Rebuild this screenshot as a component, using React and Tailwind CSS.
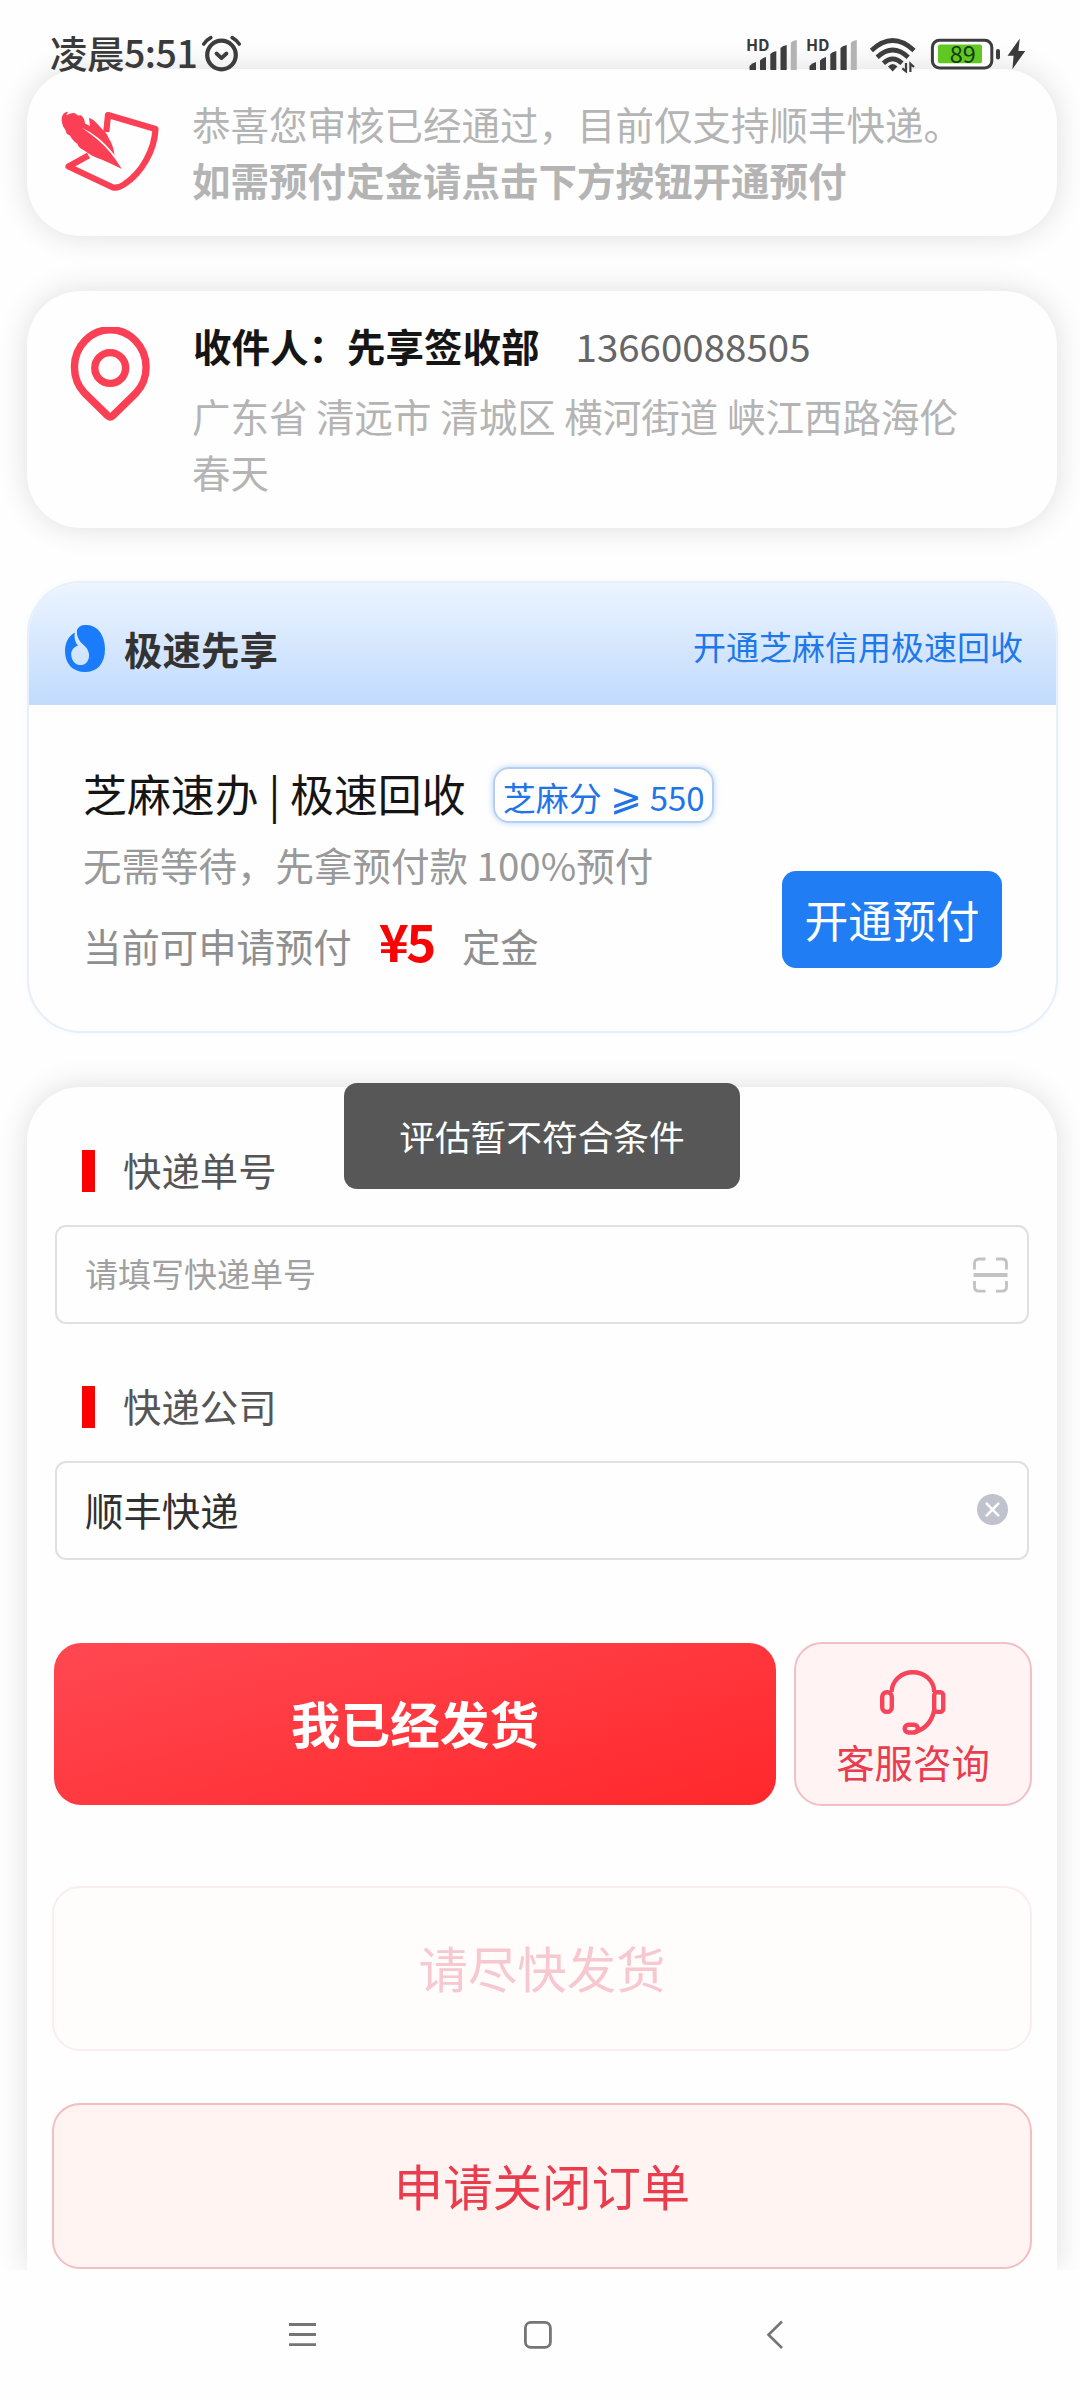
import React from "react";

const cardShadow = "shadow-[0_0_30px_rgba(0,0,0,0.13)]";

function SignalIcon() {
  return (
    <div className="relative h-[34px] w-[50px]">
      <span className="absolute -top-[5px] -left-px text-[16px] leading-[24px] font-bold whitespace-nowrap text-[#3a3a3a]">HD</span>
      <svg className="h-[34px] w-[50px]" viewBox="747 37 50 34">
        <g fill="#3d3d3d">
          <path d="M749.5 70V66Q752 63 756 62V70Z" />
          <path d="M760 70V60.5Q762 58 766 57V70Z" />
          <path d="M770.3 70V54Q772 52 776.3 51V70Z" />
          <path d="M780.5 70V48Q782 46 786.7 45V70Z" />
        </g>
        <path d="M790.8 70V43Q792 41 796.8 40V70Z" fill="#b3b3b3" />
      </svg>
    </div>
  );
}

function StatusBar() {
  return (
    <header className="relative z-10 flex h-[69px] shrink-0 items-start justify-between pl-[50px] pr-[54px]">
      <div className="flex items-start text-[37.5px] leading-[54px] font-medium text-[#3a3a3a] pt-[25px]">
        <span className="tracking-[-0.5px] whitespace-nowrap">凌晨5:51</span>
        <svg className="mt-[10px] ml-[4px] w-[40px] h-[38px]" viewBox="202 35 40 38" fill="none" stroke="#3d3d3d" strokeLinecap="round" strokeLinejoin="round">
          <circle cx="222.5" cy="55" r="14.3" strokeWidth="4.2" />
          <path d="M217.5 53.5l5 4.6 5-4.6" strokeWidth="3.8" />
          <path d="M204.8 44q2.8-4 7-6.3M240.2 44q-2.8-4-7-6.3" strokeWidth="3.6" />
        </svg>
      </div>
      <div className="flex items-start pt-[37px]">
        <SignalIcon />
        <div className="w-[10px]" />
        <SignalIcon />
        <svg className="ml-[12px] w-[48px] h-[36px]" viewBox="869 37 48 36" fill="none" stroke="#3d3d3d" strokeWidth="4.6">
          <path d="M871.4 50.5Q892.7 30.5 914 50.5" />
          <path d="M877.2 57.2Q892.7 42.8 908.2 57.2" />
          <path d="M883.4 63.2Q892.7 54.6 902 63.2" />
          <path d="M888 66.5Q892.7 61.5 897.4 66.5L892.7 71.4Z" fill="#3d3d3d" stroke="none" />
          <path d="M906 63v8.400l-3.600-3M910.400 72v-8.200l3.600 3.200" strokeWidth="2.2" />
        </svg>
        <svg className="ml-[13px] w-[72px] h-[34px]" viewBox="930 37 72 34">
          <rect x="932.4" y="40.3" width="59.4" height="27.6" rx="7" fill="#fff" stroke="#3d3d3d" strokeWidth="3" />
          <rect x="938" y="44.6" width="44" height="18.6" rx="2" fill="#5fc823" />
          <rect x="996" y="49" width="4" height="10.4" rx="2" fill="#3d3d3d" />
          <text x="962.7" y="62.8" fontSize="23.5" textAnchor="middle" fontWeight="400" fill="#173a0a">89</text>
        </svg>
        <svg className="ml-[5px] w-[19px] h-[34px]" viewBox="1007 37 19 34" fill="#3a3a3a">
          <path d="M1019.8 38.5L1007.6 55.8H1013.6L1012.4 69.2L1025.2 51H1018.4Z" />
        </svg>
      </div>
    </header>
  );
}

function QuillIcon() {
  return (
    <svg className="w-[104px] h-[84px]" viewBox="61 110 104 84">
      <path d="M107.300 132L109 115L156.500 129C155.500 150 143 173 125 184.500Q119 188.500 114 187.500L69.500 166.500L89.500 155.500" fill="none" stroke="#fb3f54" strokeWidth="6.200" strokeLinejoin="round" />
      <path d="M62.700 121C62.500 116 64 112 69 111.700L67 115.500Q72 112 76 113.300L79 115.500L82 115.300Q85.500 118 86 123.500L91 126L90 117.700Q95 119.500 98 123.500L103 129Q108 133 109.500 138Q114 144 115.600 155Q107 144 98 137Q90 131 82.700 127.700Q92 134 99 140Q112 151 122.800 169Q112 163.500 102.500 159.500Q92 156 86 151L81 148Q79 146.500 78.500 144Q73 140 71 135.500Q67 134.500 66.500 130Q63 126 62.700 121Z" fill="#fb3f54" />
    </svg>
  );
}

function PinIcon() {
  return (
    <svg className="w-[82px] h-[98px]" viewBox="69 327 82 98" fill="none" stroke="#fb3f54" strokeWidth="7.400" strokeLinejoin="round">
      <path d="M84.500 393A35.800 37.300 0 1 1 136 393L112.500 416Q110.250 418 108 416Z" />
      <circle cx="110.200" cy="368" r="15.400" />
    </svg>
  );
}

function FlameIcon() {
  return (
    <svg className="w-[40px] h-[47px]" viewBox="65 625 40 47">
      <path d="M84 625C98 624 105 636 105 649C105 664 97 672 85 672C73 672 65 664 65 651C65 643 68.500 636 74.800 632.500C74 638 75 642 78 645.500C72 648 70.500 652 71.500 657C73 663 77 665.500 81.500 665C87 664.500 89.500 659 89 654C88 648 84.500 646 80.500 642C77.500 638 76.500 634 77 630Q79 625.500 84 625Z" fill="#1b7cfb" />
    </svg>
  );
}

function HeadsetIcon() {
  return (
    <svg className="w-[66px] h-[66px]" viewBox="880 1670 66 66" fill="none" stroke="#f6455a" strokeWidth="4.400">
      <path d="M891.500 1692C892 1680 902 1672.300 912.700 1672.300C924 1672.300 934 1680 934.300 1692" />
      <rect x="882.200" y="1692.300" width="9.600" height="19.600" rx="4.500" />
      <rect x="934.200" y="1692.300" width="9" height="19.600" rx="3" />
      <path d="M934.500 1709C932 1722 925 1729.500 914 1732.300" />
      <rect x="904.700" y="1724.700" width="13.200" height="7.800" rx="3.900" />
    </svg>
  );
}

function FieldLabel({ children }) {
  return (
    <div className="flex h-[42px] items-center pl-[55px]">
      <div className="h-[42px] w-[13px] bg-[#fb0000]" />
      <div className="-mt-[4px] ml-[28px] text-[38.4px] leading-[42px] text-[#555]">{children}</div>
    </div>
  );
}

export default function App() {
  return (
    <div className="flex h-[2400px] w-[1080px] flex-col overflow-hidden bg-[#fefefe] [font-family:'Noto_Sans_CJK_SC',sans-serif]">
      <StatusBar />
      <main className="flex min-h-0 flex-1 flex-col pr-[23px] pl-[27px]">
        <section className={`flex h-[167px] shrink-0 rounded-[54px] bg-[#fefefe] pl-[33px] ${cardShadow}`}>
          <div className="mt-[41px] w-[132px]"><QuillIcon /></div>
          <div className="mt-[26px] text-[38.5px] leading-[56px] text-[#b4b4b4]">
            <p>恭喜您审核已经通过，目前仅支持顺丰快递。</p>
            <p className="font-bold">如需预付定金请点击下方按钮开通预付</p>
          </div>
        </section>

        <section className={`mt-[55px] flex h-[237px] shrink-0 rounded-[54px] bg-[#fefefe] pl-[42px] ${cardShadow}`}>
          <div className="mt-[36px] w-[123px]"><PinIcon /></div>
          <div className="mt-[26px] w-[780px] text-[38.5px] leading-[56px]">
            <div className="flex">
              <span className="ml-px font-bold text-[#151515]">收件人：先享签收部</span>
              <span className="ml-[36px] text-[#666]">13660088505</span>
            </div>
            <p className="mt-[14px] text-[#b4b4b4]">广东省 清远市 清城区 横河街道 峡江西路海伦春天</p>
          </div>
        </section>

        <section className="mt-[53px] -mr-px flex h-[452px] shrink-0 flex-col overflow-hidden rounded-[54px] border-2 border-[#e6effa] bg-[#fefefe] shadow-[0_0_5px_rgba(60,140,250,0.06)]">
          <div className="flex h-[122px] items-center bg-linear-to-b from-[#ecf4fe] to-[#c1dbfd] pt-[8px] pl-[36px] pr-[33px]">
            <FlameIcon />
            <h2 className="ml-[19px] text-[38.5px] leading-[50px] font-bold text-[#333]">极速先享</h2>
            <span className="-mt-[4px] ml-auto text-[33px] leading-[44px] text-[#1f78ea]">开通芝麻信用极速回收</span>
          </div>
          <div className="flex h-[326px] justify-between pl-[54px] pr-[54px]">
            <div className="pt-[62px]">
              <div className="flex h-[56px] items-center">
                <span className="-mt-[4px] text-[43.9px] leading-[56px] text-[#151515]">芝麻速办 | 极速回收</span>
                <span className="ml-[27px] flex h-[56px] w-[221px] items-center justify-between rounded-[16px] border-2 border-[#b4cff2] pt-[3px] pr-[7px] pl-[8px] text-[33px] leading-[48px] whitespace-nowrap text-[#1f75e6] shadow-[0_0_6px_rgba(50,125,240,0.35)]">
                  <span>芝麻分</span>
                  <span className="-mt-[6px] text-[38px] font-light">⩾</span>
                  <span>550</span>
                </span>
              </div>
              <p className="mt-[16px] text-[38.5px] leading-[50px] text-[#999]">无需等待，先拿预付款 100%预付</p>
              <div className="mt-[25px] flex items-baseline text-[38.400px] leading-[52px] text-[#8f8f8f]">
                <span>当前可申请预付</span>
                <span className="ml-[27px] text-[51px] leading-[52px] font-bold tracking-[-2.500px] text-[#f70505]">¥5</span>
                <span className="ml-[28px]">定金</span>
              </div>
            </div>
            <button className="mt-[166px] h-[97px] w-[220px] rounded-[14px] bg-[#207df3] pb-px text-[43.8px] leading-[56px] text-white">开通预付</button>
          </div>
        </section>

        <section className={`relative mt-[54px] flex flex-1 flex-col rounded-t-[54px] bg-[#fefefe] pt-[63px] ${cardShadow}`}>
          <div className="absolute -top-[4px] left-[317px] flex h-[106px] w-[396px] items-center justify-center rounded-[13px] bg-[#575757] text-[35.700px] leading-[50px] text-white">评估暂不符合条件</div>
          <FieldLabel>快递单号</FieldLabel>
          <div className="mt-[33px] mr-[28px] ml-[28px] flex h-[99px] items-center justify-between rounded-[11px] border-2 border-[#e0e0e0] pr-[19px] pl-[28px]">
            <span className="-mt-[3px] text-[33px] leading-[44px] text-[#a0a0a0]">请填写快递单号</span>
            <svg className="w-[35px] h-[36px]" viewBox="0 0 35 36" fill="none" stroke="#c2c2c2" strokeWidth="2.800">
              <path d="M1.500 12.500V6.500Q1.500 2 6 2H12.500M23 2H29Q33.500 2 33.500 6.500V12.500M1.500 24V30Q1.500 34.200 6 34.200H12.500M23 34.200H29Q33.500 34.200 33.500 30V24" />
              <path d="M0.500 18H34.500" strokeWidth="3.800" />
            </svg>
          </div>
          <div className="mt-[62px]"><FieldLabel>快递公司</FieldLabel></div>
          <div className="mt-[33px] mr-[28px] ml-[28px] flex h-[99px] items-center justify-between rounded-[11px] border-2 border-[#e0e0e0] pr-[19px] pl-[28px]">
            <span className="-mt-[4px] text-[38.400px] leading-[50px] text-[#303030]">顺丰快递</span>
            <svg className="-mt-[2px] h-[31px] w-[31px]" viewBox="0 0 31 31">
              <circle cx="15.500" cy="15.500" r="15.500" fill="#c0c3cd" />
              <path d="M9.700 9.700L21.300 21.300M21.300 9.700L9.700 21.300" stroke="#fff" strokeWidth="2.600" strokeLinecap="round" />
            </svg>
          </div>
          <div className="mt-[82px] flex items-center justify-between pr-[25px] pl-[27px]">
            <button className="h-[162px] w-[722px] rounded-[27px] bg-linear-[165deg] from-[#ff4852] to-[#ff282b] pb-[4px] text-[49.600px] leading-[60px] font-bold text-white">我已经发货</button>
            <button className="flex h-[164px] w-[238px] flex-col items-center rounded-[28px] border-2 border-[#f1bfc5] bg-[#fff4f3] pt-[26px] text-[38.400px] leading-[52px] text-[#e83d4f]">
              <HeadsetIcon />
              <span className="-mt-[1px]">客服咨询</span>
            </button>
          </div>
          <button className="mt-[80px] mr-[25px] ml-[25px] h-[165px] shrink-0 rounded-[28px] border-2 border-[#fcecec] bg-[#fffdfc] pb-[3px] text-[49.400px] leading-[60px] text-[#f7c8cf]">请尽快发货</button>
          <button className="mt-[52px] mr-[25px] ml-[25px] h-[166px] shrink-0 rounded-[28px] border-2 border-[#f1bfc0] bg-[#fff4f2] pb-[3px] text-[49.400px] leading-[60px] text-[#ea3c4d]">申请关闭订单</button>
        </section>
      </main>
      <nav className="relative z-10 flex h-[130px] shrink-0 items-start bg-[#fefefe] pt-[50px] pl-[288px]">
        <svg className="w-[29px] h-[30px]" viewBox="288 2320 29 30" stroke="#757575" strokeWidth="2.800">
          <path d="M289 2324.500H316M289 2334.500H316M289 2344.700H316" />
        </svg>
        <svg className="ml-[206px] w-[30px] h-[30px]" viewBox="523 2320 30 30" fill="none" stroke="#757575" strokeWidth="2.800">
          <rect x="525.400" y="2322.400" width="25" height="25" rx="5.500" />
        </svg>
        <svg className="ml-[212px] w-[20px] h-[30px]" viewBox="765 2320 20 30" fill="none" stroke="#757575" strokeWidth="2.600">
          <path d="M782 2321.500L768.500 2334.800L782 2348" />
        </svg>
      </nav>
    </div>
  );
}
